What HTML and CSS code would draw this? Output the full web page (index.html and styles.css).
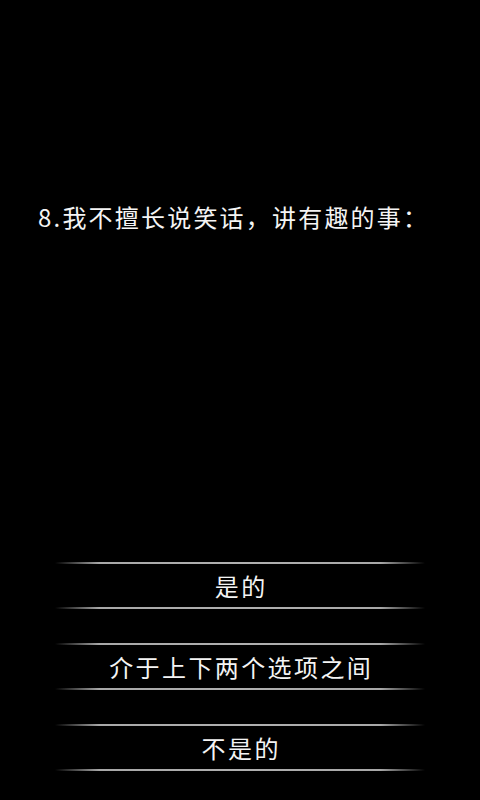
FILE: index.html
```html
<!DOCTYPE html>
<html lang="zh-CN">
<head>
  <meta charset="UTF-8">
  <meta name="viewport" content="width=device-width, initial-scale=1.0">
  <title>测试</title>
  <link rel="stylesheet" href="styles.css">
</head>
<body>
  <div class="page">
    <!-- Question -->
    <p class="question">8.我不擅长说笑话，讲有趣的事：</p>

    <!-- Answers -->
    <div class="options">
      <div class="option">是的</div>
      <div class="option">介于上下两个选项之间</div>
      <div class="option">不是的</div>
    </div>
  </div>
</body>
</html>
```

FILE: styles.css
```css
body {
  margin: 0;
  background-color: #000;
  color: #f4f4f4;
  font-family: "Noto Sans CJK SC", "DejaVu Sans", sans-serif;
}

.page {
  height: 800px;
  display: flex;
  flex-direction: column;
  box-sizing: border-box;
  padding-bottom: 29px;
}

.question {
  margin: 0;
  padding: 202px 0 0 38px;
  font-size: 24px;
  line-height: 30px;
  letter-spacing: 2.2px;
}

.options {
  margin-top: auto;
  display: flex;
  flex-direction: column;
  gap: 34px;
  padding: 0 55px;
}

.option {
  position: relative;
  height: 47px;
  display: flex;
  align-items: center;
  justify-content: center;
  font-size: 24px;
  letter-spacing: 2.4px;
  text-indent: 2.4px;
}

.option::before,
.option::after {
  content: "";
  position: absolute;
  left: 0;
  right: 0;
  height: 2px;
  background: linear-gradient(to right, rgba(170, 170, 170, 0), #a8a8a8 12%, #b0b0b0 50%, #a8a8a8 88%, rgba(170, 170, 170, 0));
}

.option::before {
  top: 0;
}

.option::after {
  bottom: 0;
}
```
